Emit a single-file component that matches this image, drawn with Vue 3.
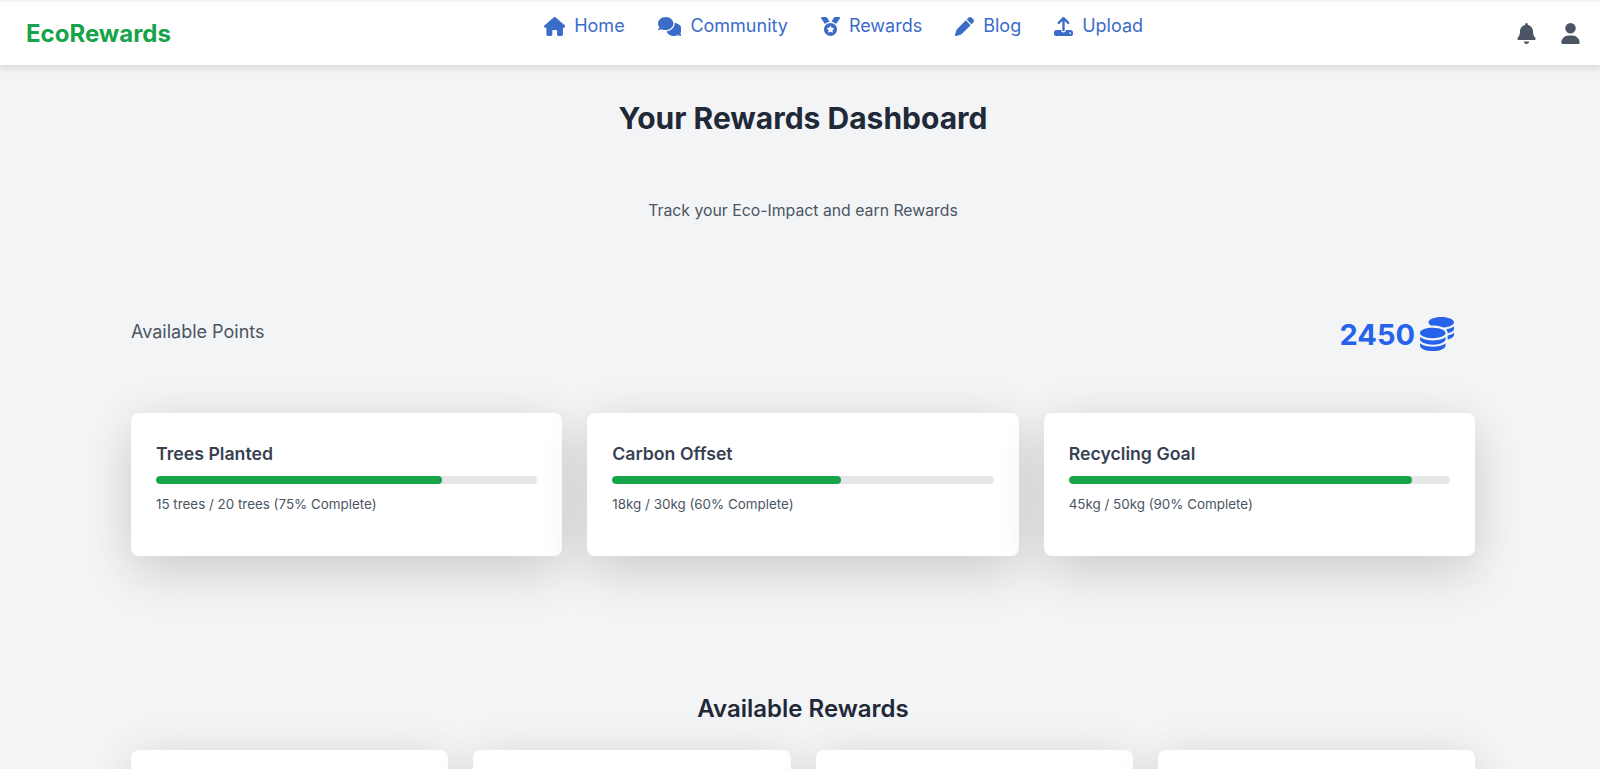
<script setup>
import { ref } from 'vue';

const navLinks = ref([
  { label: 'Home', view: '0 0 576 512', d: 'M575.8 255.5c0 18-15 32.1-32 32.1h-32l.7 160.2c0 2.7-.2 5.4-.5 8.1V472c0 22.1-17.9 40-40 40H456c-1.1 0-2.2 0-3.3-.1c-1.4 .1-2.8 .1-4.2 .1H416 392c-22.1 0-40-17.9-40-40V448 384c0-17.7-14.3-32-32-32H256c-17.7 0-32 14.3-32 32v64 24c0 22.1-17.9 40-40 40H160 128.1c-1.5 0-3-.1-4.5-.2c-1.2 .1-2.4 .2-3.6 .2H104c-22.1 0-40-17.9-40-40V360c0-.9 0-1.9 .1-2.8V287.6H32c-18 0-32-14-32-32.1c0-9 3-17 10-24L266.4 8c7-7 15-8 22-8s15 2 21 7L564.8 231.5c8 7 12 15 11 24z' },
  { label: 'Community', view: '0 0 640 512', d: 'M208 352c114.9 0 208-78.8 208-176S322.9 0 208 0S0 78.8 0 176c0 38.6 14.7 74.3 39.6 103.4c-3.5 9.4-8.7 17.7-14.2 24.7c-4.8 6.2-9.7 11-13.3 14.3c-1.8 1.6-3.3 2.9-4.3 3.7c-.5 .4-.9 .7-1.1 .8l-.2 .2 0 0 0 0C1 327.2-1.4 334.4 .8 340.9S9.1 352 16 352c21.8 0 43.8-5.6 62.1-12.5c9.2-3.5 17.8-7.4 25.3-11.4C134.1 343.3 169.8 352 208 352zM448 176c0 112.3-99.1 196.9-216.5 207C255.8 457.4 336.4 512 432 512c38.2 0 73.9-8.7 104.7-23.9c7.5 4 16 7.9 25.2 11.4c18.3 6.9 40.3 12.5 62.1 12.5c6.9 0 13.1-4.5 15.2-11.1c2.1-6.6-.2-13.8-5.8-17.9l0 0 0 0-.2-.2c-.2-.2-.6-.4-1.1-.8c-1-.8-2.5-2-4.3-3.7c-3.6-3.3-8.5-8.1-13.3-14.3c-5.5-7-10.7-15.4-14.2-24.7c24.9-29 39.6-64.7 39.6-103.4c0-92.8-84.9-168.9-192.6-175.5c.4 5.1 .6 10.3 .6 15.5z' },
  { label: 'Rewards', view: '0 0 512 512', d: 'M4.1 38.2C1.4 34.2 0 29.4 0 24.6C0 11 11 0 24.6 0H133.9c11.2 0 21.7 5.9 27.4 15.5l68.5 114.1c-48.2 6.1-91.3 28.6-123.4 61.9L4.1 38.2zm503.7 0L405.6 191.5c-32.1-33.3-75.2-55.8-123.4-61.9L350.7 15.5C356.5 5.9 366.9 0 378.1 0H487.4C501 0 512 11 512 24.6c0 4.8-1.4 9.6-4.1 13.6zM80 336a176 176 0 1 1 352 0A176 176 0 1 1 80 336zm184.4-94.9c-3.4-7-13.3-7-16.8 0l-22.4 45.4c-1.4 2.8-4 4.7-7 5.1L168 298.9c-7.7 1.1-10.7 10.5-5.2 16l36.3 35.4c2.2 2.2 3.2 5.2 2.7 8.3l-8.6 49.9c-1.3 7.6 6.7 13.5 13.6 9.9l44.8-23.6c2.7-1.4 6-1.4 8.7 0l44.8 23.6c6.9 3.6 14.9-2.2 13.6-9.9l-8.6-49.9c-.5-3 .5-6.1 2.7-8.3l36.3-35.4c5.6-5.4 2.5-14.8-5.2-16l-50.1-7.3c-3-.4-5.7-2.4-7-5.1l-22.4-45.4z' },
  { label: 'Blog', view: '0 0 512 512', d: 'M362.7 19.3L314.3 67.7 444.3 197.7l48.4-48.4c25-25 25-65.5 0-90.5L453.3 19.3c-25-25-65.5-25-90.5 0zm-71 71L58.6 323.5c-10.4 10.4-18 23.3-22.2 37.4L1 481.2C-1.5 489.7 .8 498.8 7 505s15.3 8.5 23.7 6.1l120.3-35.4c14.1-4.2 27-11.8 37.4-22.2L421.7 220.3 291.7 90.3z' },
  { label: 'Upload', view: '0 0 512 512', d: 'M288 109.3V352c0 17.7-14.3 32-32 32s-32-14.3-32-32V109.3l-73.4 73.4c-12.5 12.5-32.8 12.5-45.3 0s-12.5-32.8 0-45.3l128-128c12.5-12.5 32.8-12.5 45.3 0l128 128c12.5 12.5 12.5 32.8 0 45.3s-32.8 12.5-45.3 0L288 109.3zM64 352H192c0 35.3 28.7 64 64 64s64-28.7 64-64H448c35.3 0 64 28.7 64 64v32c0 35.3-28.7 64-64 64H64c-35.3 0-64-28.7-64-64V416c0-35.3 28.7-64 64-64zM432 456a24 24 0 1 0 0-48 24 24 0 1 0 0 48z' }
]);

const goals = ref([
  { title: 'Trees Planted', text: '15 trees / 20 trees (75% Complete)', percent: 75 },
  { title: 'Carbon Offset', text: '18kg / 30kg (60% Complete)', percent: 60 },
  { title: 'Recycling Goal', text: '45kg / 50kg (90% Complete)', percent: 90 }
]);

const rewards = ref([1, 2, 3, 4]);
</script>

<template>
  <div class="page">
    <header class="navbar">
      <div class="logo">EcoRewards</div>
      <nav class="nav-links">
        <a v-for="link in navLinks" :key="link.label" class="nav-link">
          <svg class="nav-icon" :viewBox="link.view" fill="currentColor"><path :d="link.d" /></svg>
          {{ link.label }}
        </a>
      </nav>
      <div class="nav-actions">
        <svg class="action-icon" viewBox="0 0 448 512" fill="currentColor"><path d="M224 0c-17.7 0-32 14.3-32 32V51.2C119 66 64 130.6 64 208v18.8c0 47-17.3 92.4-48.5 127.6l-7.4 8.3c-8.4 9.4-10.4 22.9-5.3 34.4S19.4 416 32 416H416c12.6 0 24-7.4 29.2-18.9s3.1-25-5.3-34.4l-7.4-8.3C401.3 319.2 384 273.9 384 226.8V208c0-77.4-55-142-128-156.8V32c0-17.7-14.3-32-32-32zm45.3 493.3c12-12 18.7-28.3 18.7-45.3H224 160c0 17 6.7 33.3 18.7 45.3s28.3 18.7 45.3 18.7s33.3-6.7 45.3-18.7z" /></svg>
        <svg class="action-icon" viewBox="0 0 448 512" fill="currentColor"><path d="M224 256A128 128 0 1 0 224 0a128 128 0 1 0 0 256zm-45.7 48C79.8 304 0 383.8 0 482.3C0 498.7 13.3 512 29.7 512H418.3c16.4 0 29.7-13.3 29.7-29.7C448 383.8 368.2 304 269.7 304H178.3z" /></svg>
      </div>
    </header>

    <main class="content">
      <h1>Your Rewards Dashboard</h1>
      <p class="subtitle">Track your Eco-Impact and earn Rewards</p>

      <div class="points-row">
        <span class="points-label">Available Points</span>
        <span class="points-value">
          2450
          <svg class="coins" viewBox="0 0 512 512" fill="currentColor"><path d="M512 80c0 18-14.3 34.6-38.4 48c-29.1 16.1-72.5 27.5-122.3 30.9c-3.7-1.8-7.4-3.5-11.3-5C300.6 137.4 248.2 128 192 128c-8.3 0-16.4 .2-24.5 .6l-1.1-.6C142.3 114.6 128 98 128 80c0-44.2 86-80 192-80S512 35.8 512 80zM160.7 161.1c10.2-.7 20.7-1.1 31.3-1.1c62.2 0 117.4 12.3 152.5 31.4C369.3 204.9 384 221.7 384 240c0 4-.7 7.9-2.1 11.7c-4.6 13.2-17 25.3-35 35.5c0 0 0 0 0 0c-.1 .1-.3 .1-.4 .2l0 0 0 0c-.3 .2-.6 .3-.9 .5c-35 19.4-90.8 32-153.6 32c-59.6 0-112.9-11.3-148.2-29.1c-1.9-.9-3.7-1.9-5.5-2.9C14.3 274.6 0 258 0 240c0-34.8 53.4-64.5 128-75.4c10.5-1.5 21.4-2.7 32.7-3.5zM416 240c0-21.9-10.6-39.9-24.1-53.4c28.3-4.4 54.2-11.4 76.2-20.5c16.3-6.8 31.5-15.2 43.9-25.5V176c0 19.3-16.5 37.1-43.8 50.9c-14.6 7.4-32.4 13.7-52.4 18.5c.1-1.8 .2-3.5 .2-5.3zm-32 96c0 18-14.3 34.6-38.4 48c-1.8 1-3.6 1.9-5.5 2.9C304.9 404.7 251.6 416 192 416c-62.8 0-118.6-12.6-153.6-32C14.3 370.6 0 354 0 336V300.6c12.5 10.3 27.6 18.7 43.9 25.5C83.4 342.6 135.8 352 192 352s108.6-9.4 148.1-25.9c7.8-3.2 15.3-6.9 22.4-10.9c6.1-3.4 11.8-7.2 17.2-11.2c1.5-1.1 2.9-2.3 4.3-3.4V304v5.7V336zm32 0V304 278.1c19-4.2 36.5-9.5 52.1-16c16.3-6.8 31.5-15.2 43.9-25.5V272c0 10.5-5 21-14.9 30.9c-16.3 16.3-45 29.7-81.3 38.4c.1-1.7 .2-3.5 .2-5.3zM192 448c56.2 0 108.6-9.4 148.1-25.9c16.3-6.8 31.5-15.2 43.9-25.5V432c0 44.2-86 80-192 80S0 476.2 0 432V396.6c12.5 10.3 27.6 18.7 43.9 25.5C83.4 438.6 135.8 448 192 448z" /></svg>
        </span>
      </div>

      <section class="goal-grid">
        <div v-for="goal in goals" :key="goal.title" class="goal-card">
          <h3>{{ goal.title }}</h3>
          <div class="track">
            <div class="fill" :style="{ width: goal.percent + '%' }"></div>
          </div>
          <p>{{ goal.text }}</p>
        </div>
      </section>

      <h2>Available Rewards</h2>
      <section class="reward-grid">
        <div v-for="reward in rewards" :key="reward" class="reward-card"></div>
      </section>
    </main>
  </div>
</template>

<style scoped>
.page {
  height: 769px;
  overflow: hidden;
  background: #f3f4f6;
  font-family: "Inter", "Liberation Sans", sans-serif;
  padding-top: 2px;
  box-sizing: border-box;
}

.navbar {
  display: flex;
  justify-content: space-between;
  align-items: flex-start;
  height: 63px;
  padding: 0 19px 0 26px;
  background: #fff;
  box-shadow: 0 4px 6px rgba(0, 0, 0, 0.1);
}

.logo {
  margin-top: 17px;
  color: #16a34a;
  font-size: 24px;
  line-height: 30px;
  font-weight: 700;
}

.nav-links {
  display: flex;
  gap: 33px;
  margin-top: 10px;
}

.nav-link {
  display: flex;
  align-items: center;
  gap: 9px;
  color: #3b6cc8;
  font-size: 18px;
  line-height: 28px;
}

.nav-icon {
  height: 19px;
  width: auto;
}

.nav-actions {
  display: flex;
  gap: 23px;
  margin-top: 21px;
  color: #4b5563;
}

.action-icon {
  height: 21px;
  width: 21px;
}

.content {
  width: 1344px;
  margin-left: 131px;
}

h1 {
  margin: 35px 0 0;
  color: #1f2937;
  text-align: center;
  font-size: 30px;
  line-height: 36px;
  font-weight: 700;
}

.subtitle {
  margin: 63px 0 0;
  color: #4b5563;
  text-align: center;
  font-size: 15.8px;
  line-height: 24px;
}

.points-row {
  display: flex;
  justify-content: space-between;
  align-items: center;
  margin-top: 94px;
  padding-right: 21px;
}

.points-label {
  color: #4b5563;
  font-size: 18px;
  margin-top: -7px;
}

.points-value {
  display: flex;
  align-items: center;
  gap: 5px;
  color: #2563eb;
  font-size: 29px;
  line-height: 36px;
  font-weight: 700;
}

.coins {
  width: 34px;
  height: 34px;
  margin-top: -2px;
}

.goal-grid {
  display: grid;
  grid-template-columns: repeat(3, 1fr);
  gap: 25px;
  margin-top: 60px;
}

.goal-card {
  height: 143px;
  box-sizing: border-box;
  padding: 29px 25px 28px;
  background: #fff;
  border-radius: 8px;
  box-shadow: 0 20px 50px rgba(0, 0, 0, 0.12), 0 0 50px rgba(0, 0, 0, 0.06);
}

.goal-card h3 {
  margin: 0;
  color: #374151;
  font-size: 17.7px;
  line-height: 24px;
  font-weight: 600;
}

.track {
  height: 8px;
  margin-top: 10px;
  background: #e5e7eb;
  border-radius: 4px;
  overflow: hidden;
}

.fill {
  height: 100%;
  background: #16a34a;
  border-radius: 4px;
}

.goal-card p {
  margin: 10px 0 0;
  color: #4b5563;
  font-size: 13.4px;
  line-height: 20px;
}

h2 {
  margin: 137px 0 0;
  color: #1f2937;
  text-align: center;
  font-size: 24px;
  line-height: 32px;
  font-weight: 600;
}

.reward-grid {
  display: grid;
  grid-template-columns: repeat(4, 1fr);
  gap: 25px;
  margin-top: 25px;
}

.reward-card {
  height: 220px;
  background: #fff;
  border-radius: 8px;
  box-shadow: 0 20px 50px rgba(0, 0, 0, 0.12), 0 0 50px rgba(0, 0, 0, 0.06);
}
</style>
